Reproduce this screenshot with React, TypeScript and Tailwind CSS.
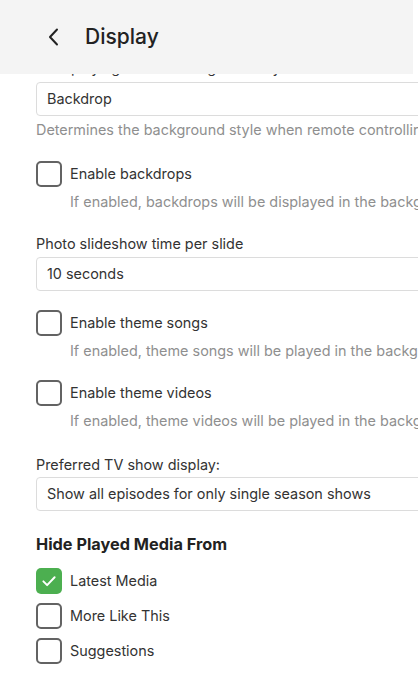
import React from "react";

const font = { fontFamily: "Inter, 'Noto Sans', sans-serif" };

function Box({ checked = false }: { checked?: boolean }) {
  return checked ? (
    <div className="w-[26px] h-[26px] shrink-0 rounded-[5px] bg-[#4caf50] flex items-center justify-center">
      <svg width="18" height="18" viewBox="0 0 24 24" fill="none" stroke="white" strokeWidth="2.6" strokeLinecap="round" strokeLinejoin="round">
        <path d="M4.5 12.5l5 5L19.5 7" />
      </svg>
    </div>
  ) : (
    <div className="w-[26px] h-[26px] shrink-0 rounded-[5px] border-2 border-[#636363] bg-white" />
  );
}

function Select({ value }: { value: string }) {
  return (
    <div className="h-[34px] w-[640px] rounded-[4px] border border-[#dcdcdc] bg-white flex items-center pl-[10px] text-[14.4px] text-[#333]">
      {value}
    </div>
  );
}

function CheckRow({ label, desc }: { label: string; desc?: string }) {
  return (
    <div>
      <div className="flex items-center gap-[8px] h-[26px]">
        <Box />
        <span className="text-[14.4px] text-[#333] whitespace-nowrap">{label}</span>
      </div>
      {desc && (
        <div className="pl-[34px] mt-[5px] text-[14.4px] leading-[20px] text-[#8f8f8f] whitespace-nowrap">{desc}</div>
      )}
    </div>
  );
}

export default function App() {
  return (
    <div className="relative w-[418px] h-[696px] overflow-hidden bg-white" style={font}>
      <div className="absolute top-0 left-0 z-10 w-[413px] h-[74px] bg-[#f4f4f4] flex items-center pl-[46px]">
        <svg width="16" height="20" viewBox="0 0 16 20" fill="none" stroke="#222" strokeWidth="2" strokeLinecap="round" strokeLinejoin="round">
          <path d="M11 2.5L4 10l7 7.5" />
        </svg>
        <span className="ml-[23px] text-[21px] font-medium text-[#222]">Display</span>
      </div>

      <div className="pt-[58px] pl-[36px] w-[700px] flex flex-col">
        <div className="text-[14.4px] leading-[20px] text-[#333] whitespace-nowrap">Now playing screen background style</div>
        <div className="mt-[4px]">
          <Select value="Backdrop" />
        </div>
        <div className="mt-[4px] text-[14.4px] leading-[20px] text-[#8f8f8f] whitespace-nowrap">
          Determines the background style when remote controlling media.
        </div>

        <div className="mt-[21px]">
          <CheckRow label="Enable backdrops" desc="If enabled, backdrops will be displayed in the background of certain pages while browsing the library." />
        </div>

        <div className="mt-[22px] text-[14.4px] leading-[20px] text-[#333] whitespace-nowrap">Photo slideshow time per slide</div>
        <div className="mt-[3px]">
          <Select value="10 seconds" />
        </div>

        <div className="mt-[19px]">
          <CheckRow label="Enable theme songs" desc="If enabled, theme songs will be played in the background while browsing the library." />
        </div>
        <div className="mt-[19px]">
          <CheckRow label="Enable theme videos" desc="If enabled, theme videos will be played in the background while browsing the library." />
        </div>

        <div className="mt-[24px] text-[14.4px] leading-[20px] text-[#333] whitespace-nowrap">Preferred TV show display:</div>
        <div className="mt-[2px]">
          <Select value="Show all episodes for only single season shows" />
        </div>

        <div className="mt-[21px] text-[16.3px] leading-[24px] font-bold text-[#222]">Hide Played Media From</div>
        <div className="mt-[12px] flex flex-col gap-[9px]">
          <div className="flex items-center gap-[8px] h-[26px]">
            <Box checked />
            <span className="text-[14.4px] text-[#333]">Latest Media</span>
          </div>
          <CheckRow label="More Like This" />
          <CheckRow label="Suggestions" />
        </div>
      </div>
    </div>
  );
}
